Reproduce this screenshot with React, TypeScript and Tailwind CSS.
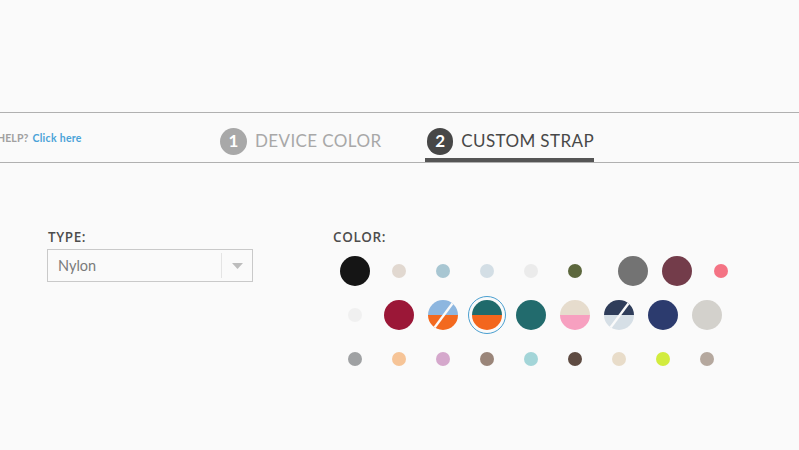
import React from "react";

type Sw =
  | { kind: "solid"; c: string; size: number; ml?: number }
  | { kind: "half"; top: string; bottom: string; size: number; selected?: boolean }
  | { kind: "slash"; top: string; bottom: string; size: number };

const rows: Sw[][] = [
  [
    { kind: "solid", c: "#151515", size: 30 },
    { kind: "solid", c: "#e1d8d0", size: 14 },
    { kind: "solid", c: "#a8c6d2", size: 14 },
    { kind: "solid", c: "#d3dee5", size: 14 },
    { kind: "solid", c: "#ebebeb", size: 14 },
    { kind: "solid", c: "#5c673d", size: 14 },
    { kind: "solid", c: "#737373", size: 30, ml: 14 },
    { kind: "solid", c: "#733c4a", size: 30 },
    { kind: "solid", c: "#f47384", size: 14 },
  ],
  [
    { kind: "solid", c: "#f0f0f0", size: 14 },
    { kind: "solid", c: "#9b1737", size: 30 },
    { kind: "slash", top: "#8db6df", bottom: "#f3691f", size: 30 },
    { kind: "half", top: "#1f6a6b", bottom: "#f3661d", size: 30, selected: true },
    { kind: "solid", c: "#226b6d", size: 30 },
    { kind: "half", top: "#e6dccd", bottom: "#f7a0c0", size: 30 },
    { kind: "slash", top: "#2f3d5a", bottom: "#d6dfe6", size: 30 },
    { kind: "solid", c: "#2c3b6e", size: 30 },
    { kind: "solid", c: "#d3d1cc", size: 30 },
  ],
  [
    { kind: "solid", c: "#9fa1a3", size: 14 },
    { kind: "solid", c: "#f6c497", size: 14 },
    { kind: "solid", c: "#d5a8cc", size: 14 },
    { kind: "solid", c: "#9a8579", size: 14 },
    { kind: "solid", c: "#a3d5d8", size: 14 },
    { kind: "solid", c: "#5e4b42", size: 14 },
    { kind: "solid", c: "#e8dcc9", size: 14 },
    { kind: "solid", c: "#d2ec3e", size: 14 },
    { kind: "solid", c: "#b5a89e", size: 14 },
  ],
];

function Swatch({ s }: { s: Sw }) {
  if (s.kind === "solid") {
    return (
      <div
        className="w-[44px] h-[44px] flex items-center justify-center shrink-0"
        style={{ marginLeft: s.ml ?? 0 }}
      >
        <div className="rounded-full" style={{ width: s.size, height: s.size, background: s.c }} />
      </div>
    );
  }
  const id = `c${s.top.slice(1)}${s.bottom.slice(1)}`;
  const svg = (
    <svg width={30} height={30} viewBox="0 0 30 30">
      <defs>
        <clipPath id={id}>
          <circle cx={15} cy={15} r={15} />
        </clipPath>
      </defs>
      <g clipPath={`url(#${id})`}>
        <rect x={0} y={0} width={30} height={15} fill={s.top} />
        <rect x={0} y={15} width={30} height={15} fill={s.bottom} />
        {s.kind === "slash" && (
          <line x1={4} y1={31} x2={27} y2={0} stroke="#fafafa" strokeWidth={2.4} />
        )}
      </g>
    </svg>
  );
  return (
    <div className="w-[44px] h-[44px] flex items-center justify-center shrink-0">
      {s.kind === "half" && s.selected ? (
        <div className="w-[38px] h-[38px] rounded-full border border-[#4a9fd0] flex items-center justify-center">
          {svg}
        </div>
      ) : (
        svg
      )}
    </div>
  );
}

export default function App() {
  const font = { fontFamily: "Lato, 'Open Sans', Arial, sans-serif" };
  const labelFont = { fontFamily: "'Open Sans', Arial, sans-serif" };
  return (
    <div className="w-[799px] h-[450px] bg-[#fafafa] overflow-hidden" style={font}>
      <div className="h-[112px]" />
      <div className="border-t border-b border-[#b0b0b0] h-[51px] flex">
        <div className="w-[223px] shrink-0 flex items-center ml-[-3px] pt-[2px] whitespace-nowrap">
          <span className="text-[10.5px] font-bold text-[#a0a0a0] tracking-[0.1px]">HELP?</span>
          <span className="text-[10.5px] font-bold text-[#4aa3d8] ml-[4px] tracking-[0.3px]">Click here</span>
        </div>
        <div className="w-[205px] shrink-0 flex items-center pt-[7px] whitespace-nowrap">
          <div className="w-[27px] h-[27px] rounded-full bg-[#a8a8a8] text-white flex items-center justify-center text-[17px] font-bold">
            1
          </div>
          <span className="ml-[8px] text-[17px] text-[#a8a8a8] tracking-[0.4px]">DEVICE COLOR</span>
        </div>
        <div className="w-[169px] shrink-0 flex flex-col">
          <div className="flex-1 flex items-center pl-[2px] pt-[11px] whitespace-nowrap">
            <div className="w-[27px] h-[27px] rounded-full bg-[#474747] text-white flex items-center justify-center text-[17px] font-bold">
              2
            </div>
            <span className="ml-[8px] text-[17px] text-[#484848] tracking-[0.4px]">CUSTOM STRAP</span>
          </div>
          <div className="h-[4px] bg-[#555555]" />
        </div>
      </div>
      <div className="flex pt-[64px]">
        <div className="ml-[47px] w-[206px] shrink-0">
          <div
            className="h-[20px] leading-[20px] pl-[1px] text-[13.5px] font-semibold text-[#4d4d4d] tracking-[0.6px]"
            style={labelFont}
          >
            TYPE:
          </div>
          <div className="mt-[2px] h-[33px] border border-[#c9c9c9] flex items-center">
            <span className="pl-[10px] text-[14.5px] text-[#7a7a7a] flex-1">Nylon</span>
            <div className="w-px h-[25px] bg-[#e4e4e4]" />
            <div className="w-[30px] flex items-center justify-center">
              <svg width="11" height="6" viewBox="0 0 11 6">
                <path d="M0 0 H11 L5.5 6 Z" fill="#bdbdbd" />
              </svg>
            </div>
          </div>
        </div>
        <div className="ml-[80px]">
          <div
            className="h-[20px] leading-[20px] text-[13.5px] font-semibold text-[#4d4d4d] tracking-[0.6px]"
            style={labelFont}
          >
            COLOR:
          </div>
          <div className="mt-[2px] flex flex-col">
            {rows.map((r, i) => (
              <div key={i} className="flex">
                {r.map((s, j) => (
                  <Swatch key={j} s={s} />
                ))}
              </div>
            ))}
          </div>
        </div>
      </div>
    </div>
  );
}
